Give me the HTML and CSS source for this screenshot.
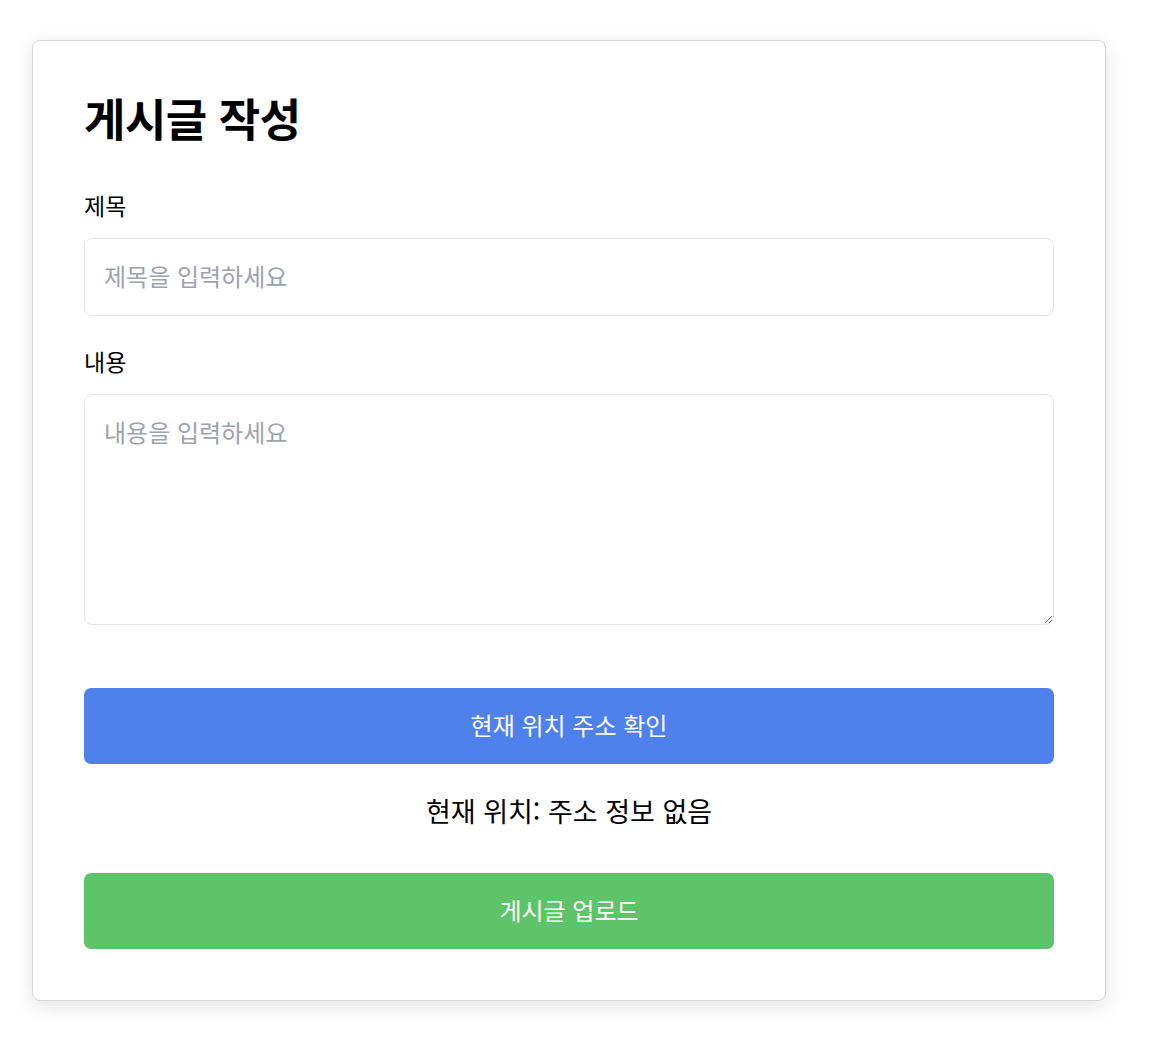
FILE: index.html
```html
<!DOCTYPE html>
<html lang="ko">
<head>
<meta charset="utf-8">
<title>게시글 작성</title>
<link rel="stylesheet" href="styles.css">
</head>
<body>
<div class="card">
  <h1 class="title">게시글 작성</h1>
  <label class="label" for="title">제목</label>
  <input class="input" id="title" type="text" placeholder="제목을 입력하세요">
  <label class="label label-second" for="content">내용</label>
  <textarea class="textarea" id="content" placeholder="내용을 입력하세요"></textarea>
  <button class="btn btn-blue" type="button">현재 위치 주소 확인</button>
  <p class="status">현재 위치: 주소 정보 없음</p>
  <button class="btn btn-green" type="button">게시글 업로드</button>
</div>
</body>
</html>
```

FILE: styles.css
```css
html, body {
  margin: 0;
  padding: 0;
  background: #ffffff;
}
body {
  font-family: "Noto Sans CJK KR", "Noto Sans", sans-serif;
  color: #000;
  padding-bottom: 40px;
}
.card {
  box-sizing: border-box;
  width: 1074px;
  margin: 40px 0 0 32px;
  padding: 51px;
  border: 1px solid #d6d6d6;
  border-radius: 8px;
  background: #fff;
  box-shadow: 0 6px 20px rgba(0, 0, 0, 0.11);
  display: flex;
  flex-direction: column;
}
.title {
  margin: 0 0 46px 0;
  font-size: 45px;
  line-height: 52px;
  font-weight: 700;
  letter-spacing: -0.5px;
}
.label {
  display: block;
  font-size: 23px;
  line-height: 30px;
  margin-bottom: 18px;
}
.label-second {
  margin-top: 30px;
}
.input, .textarea {
  box-sizing: border-box;
  width: 100%;
  border: 1px solid #e3e5e8;
  border-radius: 8px;
  font-family: inherit;
  font-size: 24px;
  color: #000;
  outline: none;
  background: #fff;
}
.input {
  height: 78px;
  padding: 0 19px 3px 19px;
  line-height: 30px;
}
.textarea {
  height: 231px;
  padding: 21px 19px;
  line-height: 32px;
  resize: vertical;
}
.input::placeholder, .textarea::placeholder {
  color: #9ca3af;
}
.btn {
  box-sizing: border-box;
  width: 100%;
  height: 76px;
  padding: 0 0 3px 0;
  border: none;
  border-radius: 7px;
  color: #fff;
  font-family: inherit;
  font-size: 24px;
  cursor: pointer;
}
.btn-blue {
  margin-top: 63px;
  background: #4f81ed;
}
.btn-green {
  background: #5ec46a;
}
.status {
  margin: 30px 0 45px 0;
  text-align: center;
  font-size: 27px;
  line-height: 34px;
}
```
